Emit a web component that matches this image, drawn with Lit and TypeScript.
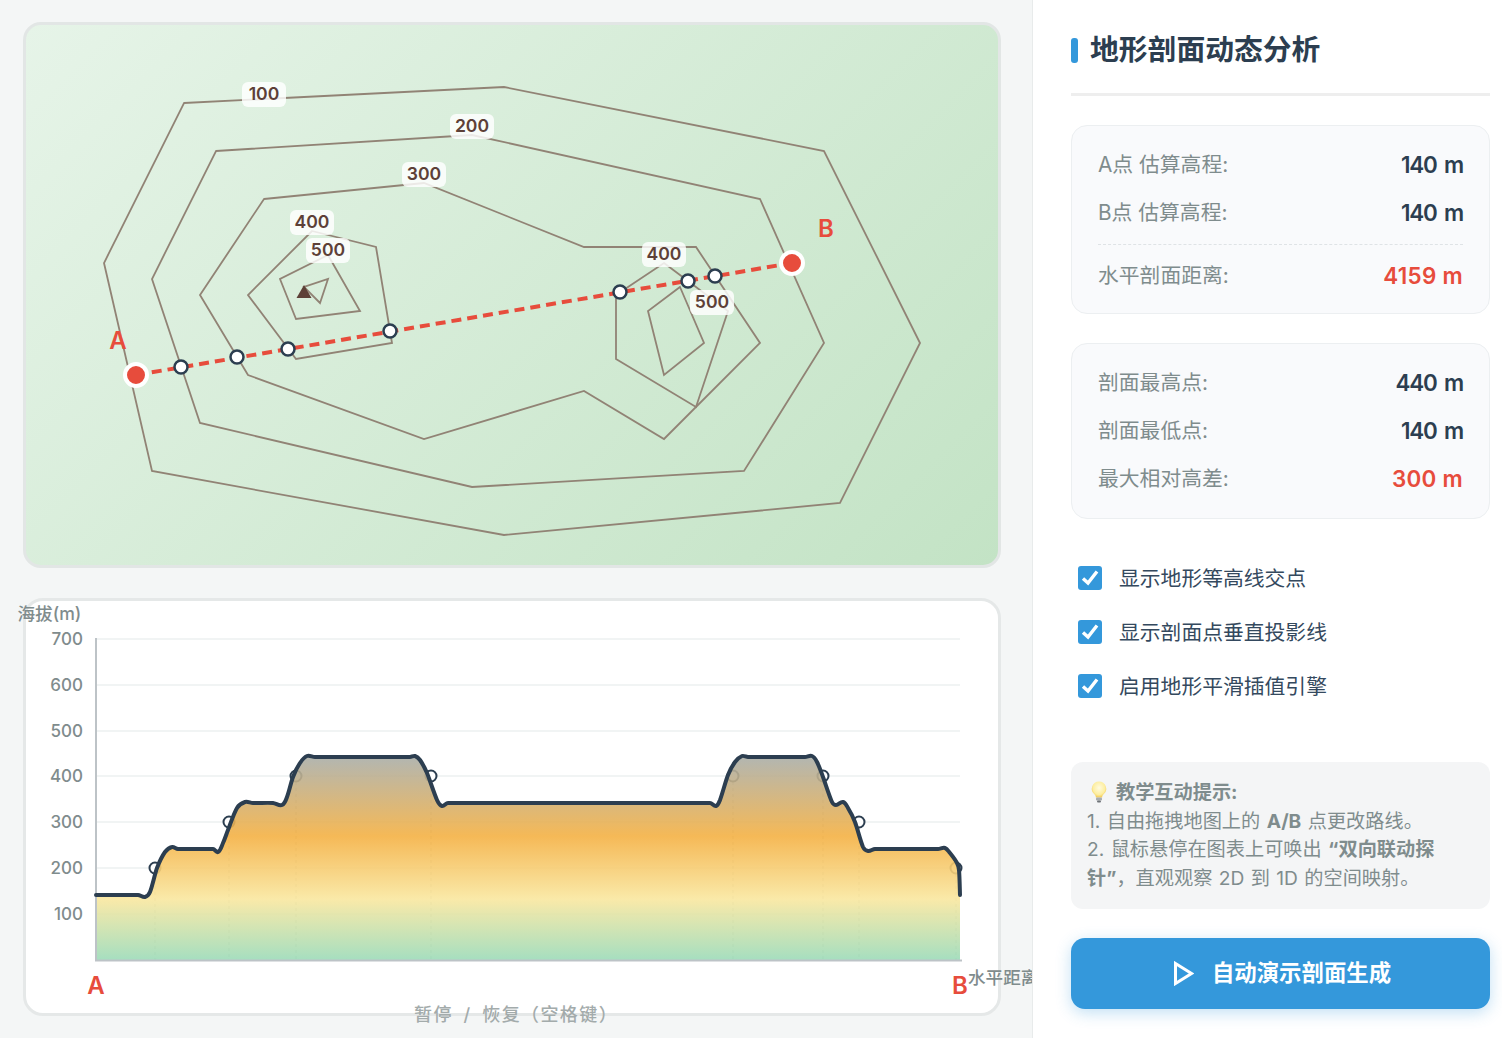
import { LitElement, html, css, svg } from "lit";
import { customElement } from "lit/decorators.js";

type P = [number, number];

const CONTOURS: P[][] = [
  [[184,103],[504,87],[824,151],[920,343],[840,503],[504,535],[152,471],[104,263]],
  [[216,151],[472,135],[760,199],[824,343],[744,471],[472,487],[200,423],[152,279]],
  [[264,199],[424,183],[584,247],[696,247],[760,343],[664,439],[584,391],[424,439],[248,375],[200,295]],
  [[312,231],[376,247],[392,343],[296,359],[248,295]],
  [[328,255],[360,311],[296,319],[280,279]],
  [[328,279],[320,303],[304,287]],
  [[664,263],[728,311],[696,407],[616,359],[616,295]],
  [[680,287],[704,343],[664,375],[648,311]],
];

const LABELS: { t: string; x: number; y: number }[] = [
  { t: "100", x: 264, y: 94.5 },
  { t: "200", x: 472, y: 126.5 },
  { t: "300", x: 424, y: 174.5 },
  { t: "400", x: 312, y: 222.5 },
  { t: "500", x: 328, y: 250.5 },
  { t: "400", x: 664, y: 254.5 },
  { t: "500", x: 712, y: 302.5 },
];

const CROSS: P[] = [[181,367],[237,357],[288,349],[390,331],[620,292],[688,281],[715,276]];
const TICKS: [string, number][] = [["700",638.5],["600",684.5],["500",730.5],["400",776],["300",822],["200",868],["100",914]];
const GRID: number[] = [639,685,731,776,822,868,914];
const MARKS: P[] = [[155,868],[229,822],[296,776],[431,776],[733,776],[823,776],[859,822],[956,868]];

const CURVE: P[] = [
  [96,895],[138,895],[145,897],[150,892],[157,868],[165,852],[172,847],[178,849],[213,849],[218,852],[223,843],
  [228,830],[237,808],[245,802],[253,803],[273,803],[282,805],[287,797],[293,777],[300,763],[307,756],[315,757],
  [410,757],[415,756],[420,760],[427,773],[437,800],[442,806],[448,803],[710,803],[716,806],[720,800],[728,775],
  [735,762],[742,756],[748,757],[805,757],[812,756],[817,762],[823,777],[832,802],[836,805],[843,802],[848,808],
  [855,822],[863,847],[868,851],[875,849],[938,849],[945,848],[950,853],[957,863],[959,870],[960,895],
];

function smooth(pts: P[]): string {
  const tangent = (i: number): P => {
    const a = pts[Math.max(i - 1, 0)], c = pts[Math.min(i + 1, pts.length - 1)];
    const dx = c[0] - a[0], dy = c[1] - a[1], n = Math.hypot(dx, dy) || 1;
    return [dx / n, dy / n];
  };
  let d = `M${pts[0][0]} ${pts[0][1]}`;
  for (let i = 0; i < pts.length - 1; i++) {
    const b = pts[i], c = pts[i + 1];
    const len = Math.min(Math.hypot(c[0] - b[0], c[1] - b[1]), 18) * 0.33;
    const t0 = tangent(i), t1 = tangent(i + 1);
    d += ` C${(b[0] + t0[0] * len).toFixed(1)} ${(b[1] + t0[1] * len).toFixed(1)} ${(c[0] - t1[0] * len).toFixed(1)} ${(c[1] - t1[1] * len).toFixed(1)} ${c[0]} ${c[1]}`;
  }
  return d;
}

const pointsAttr = (p: P[]) => p.map((q) => q.join(",")).join(" ");

@customElement("app-root")
export class AppRoot extends LitElement {
  static styles = css`
    :host {
      display: flex;
      width: 1502px;
      height: 1038px;
      overflow: hidden;
      background: #f4f6f6;
      font-family: "Inter", "Noto Sans CJK SC", sans-serif;
      color: #2c3e50;
    }
    .main {
      flex: 1;
      min-width: 0;
      display: flex;
      flex-direction: column;
      gap: 30px;
      padding: 22px 31px 22px 23px;
    }
    .map {
      height: 546px;
      box-sizing: border-box;
      flex: none;
      border: 3px solid #e2e6e5;
      border-radius: 18px;
      background: linear-gradient(135deg, #e6f4e8 0%, #c3e3c5 100%);
    }
    .chart {
      flex: 1;
      min-height: 0;
      box-sizing: border-box;
      border: 3px solid #e5e8e8;
      border-radius: 20px;
      background: #fff;
    }
    .stage { display: block; width: 100%; height: 100%; overflow: visible; }
    .contour { fill: none; stroke: #918375; stroke-width: 1.8; stroke-linejoin: miter; }
    .peak { fill: #5d4037; }
    .tag-bg { fill: rgba(255, 255, 255, 0.82); }
    .tag { font-size: 17.6px; font-weight: 600; fill: #5d4037; text-anchor: middle; dominant-baseline: central; }
    .route { stroke: #e74c3c; stroke-width: 4; stroke-dasharray: 10 6; }
    .cross { fill: #fff; stroke: #2c3e50; stroke-width: 2.5; }
    .end { fill: #e74c3c; stroke: #fff; stroke-width: 4; }
    .letter { font-size: 24px; font-weight: 600; fill: #e74c3c; text-anchor: middle; }
    .grid { stroke: #ecf0f1; stroke-width: 1.5; }
    .axis { stroke: #bdc3c7; stroke-width: 2; }
    .tick { font-size: 17px; font-weight: 500; fill: #7f8c8d; text-anchor: end; dominant-baseline: central; }
    .axis-name { font-size: 17.6px; font-weight: 500; fill: #7f8c8d; dominant-baseline: central; }
    .proj { stroke: #bdc3c7; stroke-width: 1; stroke-dasharray: 3 3; }
    .mark { fill: #fff; stroke: #2c3e50; stroke-width: 2; }
    .area { opacity: 0.9; }
    .curve { fill: none; stroke: #2c3e50; stroke-width: 4; stroke-linejoin: round; stroke-linecap: round; }
    .hint { font-size: 18px; font-weight: 500; fill: #a3abab; dominant-baseline: central; letter-spacing: 1.4px; word-spacing: 4.5px; }

    .panel {
      flex: none;
      width: 470px;
      box-sizing: border-box;
      position: relative;
      z-index: 1;
      background: #fff;
      border-left: 1px solid #e8ebeb;
      padding: 32px 12px 29px 38px;
      display: flex;
      flex-direction: column;
    }
    .title {
      margin: 0 0 29px;
      padding-bottom: 25px;
      border-bottom: 3px solid #eeeeee;
      font-size: 28.8px;
      line-height: 36px;
      font-weight: 700;
      color: #2c3e50;
      display: flex;
      align-items: center;
      gap: 12px;
    }
    .title i { width: 7px; height: 25px; border-radius: 3px; background: #3498db; }
    .card {
      background: #f9fafc;
      border: 1px solid #eceff1;
      border-radius: 16px;
      padding: 14px 26px;
    }
    .card.second { margin-top: 29px; padding-bottom: 16px; }
    .row {
      height: 48px;
      display: flex;
      align-items: center;
      justify-content: space-between;
      font-size: 20.8px;
      color: #7f8c8d;
    }
    .row span { margin-bottom: 2px; }
    .row b { font-size: 22.4px; font-weight: 600; letter-spacing: -1.2px; word-spacing: 3px; color: #2c3e50; }
    .row b.hot { color: #e74c3c; letter-spacing: 0.3px; word-spacing: 0; }
    .sep { border-top: 1px dashed #dfe3e6; margin: 8px 0 6px; }
    .checks { margin-top: 44px; display: flex; flex-direction: column; gap: 24px; padding-left: 7px; }
    .check { height: 30px; display: flex; align-items: center; gap: 17px; font-size: 20.8px; color: #34495e; }
    .check em { font-style: normal; margin-bottom: 2px; }
    .box {
      width: 24px;
      height: 24px;
      border-radius: 3px;
      background: #3498db;
      display: flex;
    }
    .tip {
      margin-top: auto;
      background: #f4f5f6;
      border-radius: 12px;
      padding: 16px;
      font-size: 19.2px;
      line-height: 28.8px;
      word-spacing: 1px;
      color: #7f8c8d;
    }
    .tip strong { font-weight: 700; }
    .bulb { display: inline-block; vertical-align: -5px; width: 24px; height: 24px; margin-right: 5px; }
    .go {
      margin-top: 29px;
      height: 71px;
      flex: none;
      border: none;
      border-radius: 14px;
      background: #3498db;
      box-shadow: 0 4px 15px rgba(52, 152, 219, 0.3);
      color: #fff;
      font: inherit;
      font-size: 22.4px;
      font-weight: 700;
      display: flex;
      align-items: center;
      justify-content: center;
      gap: 18px;
      padding: 0 0 0 3px;
    }
    .go em { font-style: normal; margin-bottom: 5px; }
  `;

  private mapLayer() {
    return svg`
      ${CONTOURS.map((c) => svg`<polygon class="contour" points=${pointsAttr(c)}></polygon>`)}
      <polygon class="peak" points="304,285 311.5,298 296.5,298"></polygon>
      ${LABELS.map((l) => svg`
        <rect class="tag-bg" x=${l.x - 22} y=${l.y - 12.5} width="44" height="25" rx="6"></rect>
        <text class="tag" x=${l.x} y=${l.y - 1}>${l.t}</text>`)}
      <line class="route" x1="136" y1="375" x2="792" y2="263"></line>
      ${CROSS.map((p) => svg`<circle class="cross" cx=${p[0]} cy=${p[1]} r="6.5"></circle>`)}
      <circle class="end" cx="136" cy="375" r="11"></circle>
      <circle class="end" cx="792" cy="263" r="11"></circle>
      <text class="letter" x="118" y="349">A</text>
      <text class="letter" x="826" y="237">B</text>`;
  }

  private chartLayer() {
    const line = smooth(CURVE);
    return svg`
      <defs>
        <linearGradient id="alt" gradientUnits="userSpaceOnUse" x1="0" y1="757" x2="0" y2="960">
          <stop offset="0" stop-color="#aaaea8"></stop>
          <stop offset="0.39" stop-color="#f4b144"></stop>
          <stop offset="0.7" stop-color="#f9e79f"></stop>
          <stop offset="1" stop-color="#9cdbb9"></stop>
        </linearGradient>
      </defs>
      ${GRID.map((y) => svg`<line class="grid" x1="96" x2="960" y1=${y} y2=${y}></line>`)}
      ${TICKS.map((t) => svg`<text class="tick" x="83" y=${t[1]}>${t[0]}</text>`)}
      ${MARKS.map((m) => svg`
        <line class="proj" x1=${m[0]} x2=${m[0]} y1=${m[1]} y2="960"></line>
        <circle class="mark" cx=${m[0]} cy=${m[1]} r="5.5"></circle>`)}
      <path class="area" fill="url(#alt)" d="${line} L960 960 L96 960 Z"></path>
      <line class="axis" x1="96" x2="96" y1="638" y2="961"></line>
      <line class="axis" x1="95" x2="962" y1="960.5" y2="960.5"></line>
      <path class="curve" d=${line}></path>
      <text class="axis-name" x="17.5" y="613">海拔(m)</text>
      <text class="axis-name" x="968" y="977">水平距离</text>
      <text class="letter" x="96" y="994">A</text>
      <text class="letter" x="960" y="994">B</text>
      <text class="hint" x="414" y="1014">暂停 / 恢复（空格键）</text>`;
  }

  private stat(label: string, value: string, hot = false) {
    return html`<div class="row"><span>${label}</span><b class=${hot ? "hot" : ""}>${value}</b></div>`;
  }

  private check(label: string) {
    return html`<label class="check">
      <span class="box">
        <svg width="24" height="24" viewBox="0 0 24 24" fill="none" stroke="#fff" stroke-width="3.4">
          <path d="M5 12.5L10 17L19 5.5"></path>
        </svg>
      </span>
      <em>${label}</em>
    </label>`;
  }

  render() {
    return html`
      <div class="main">
        <div class="map">
          <svg class="stage" viewBox="26 25 972 540">${this.mapLayer()}</svg>
        </div>
        <div class="chart">
          <svg class="stage" viewBox="26 601 972 412">${this.chartLayer()}</svg>
        </div>
      </div>
      <aside class="panel">
        <h1 class="title"><i></i>地形剖面动态分析</h1>
        <div class="card">
          ${this.stat("A点 估算高程:", "140 m")}
          ${this.stat("B点 估算高程:", "140 m")}
          <div class="sep"></div>
          ${this.stat("水平剖面距离:", "4159 m", true)}
        </div>
        <div class="card second">
          ${this.stat("剖面最高点:", "440 m")}
          ${this.stat("剖面最低点:", "140 m")}
          ${this.stat("最大相对高差:", "300 m", true)}
        </div>
        <div class="checks">
          ${this.check("显示地形等高线交点")}
          ${this.check("显示剖面点垂直投影线")}
          ${this.check("启用地形平滑插值引擎")}
        </div>
        <div class="tip">
          <svg class="bulb" viewBox="0 0 24 24">
            <defs>
              <radialGradient id="glow" cx="0.5" cy="0.4" r="0.6">
                <stop offset="0" stop-color="#fffbe0"></stop>
                <stop offset="0.7" stop-color="#fdeea0"></stop>
                <stop offset="1" stop-color="#f3c94f"></stop>
              </radialGradient>
            </defs>
            <path fill="url(#glow)" d="M12 1.5a7.2 7.2 0 0 0-4.6 12.7c1 .9 1.4 2 1.5 3.3h6.2c.1-1.3.5-2.4 1.5-3.3A7.2 7.2 0 0 0 12 1.5Z"></path>
            <rect x="9" y="17.6" width="6" height="3" rx="1" fill="#a9adb0"></rect>
            <rect x="10" y="20.6" width="4" height="2" rx="1" fill="#6f7478"></rect>
          </svg><strong>教学互动提示:</strong><br />
          1. 自由拖拽地图上的 <strong>A/B</strong> 点更改路线。<br />
          2. 鼠标悬停在图表上可唤出 <strong>“双向联动探针”</strong>，直观观察 2D 到 1D 的空间映射。
        </div>
        <button class="go">
          <svg width="21" height="25" viewBox="0 0 21 25" fill="none" stroke="#fff" stroke-width="3">
            <polygon points="2.5,2.5 18.5,12.5 2.5,22.5"></polygon>
          </svg>
          <em>自动演示剖面生成</em>
        </button>
      </aside>
    `;
  }
}
